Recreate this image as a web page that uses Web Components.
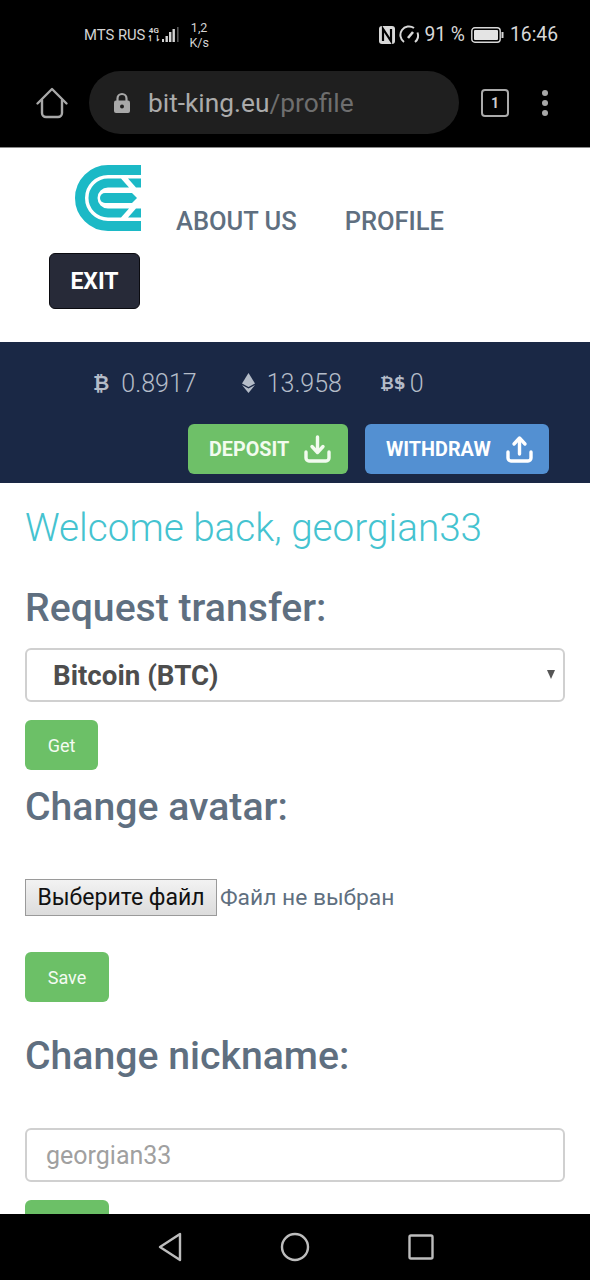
<!DOCTYPE html>
<html lang="en">
<head>
<meta charset="utf-8">
<title>bit-king.eu/profile</title>
<style>
	html,body{margin:0;height:100%;overflow:hidden;background:#fff;font-family:Roboto,"Liberation Sans",sans-serif}
	body{display:flex;flex-direction:column;height:1280px}
	profile-panel{flex:1;min-height:0}
</style>
</head>
<body>
<phone-top></phone-top>
<site-header></site-header>
<balance-bar></balance-bar>
<profile-panel>
	<section-title style="margin-top:35px">Request transfer:</section-title>
	<coin-select style="margin-top:20px"></coin-select>
	<app-button style="margin-top:18px;width:73px">Get</app-button>
	<section-title style="margin-top:17px">Change avatar:</section-title>
	<file-picker style="margin-top:52px"></file-picker>
	<app-button style="margin-top:36px;width:84px">Save</app-button>
	<section-title style="margin-top:34px">Change nickname:</section-title>
	<nick-input style="margin-top:52px"></nick-input>
	<!-- label of this one sits under the phone nav in the reference -->
	<app-button style="margin-top:18px;width:84px"></app-button>
</profile-panel>
<phone-nav></phone-nav>
<script>
function makeElement(name,html){
	const template=document.createElement('template');
	template.innerHTML=html;
	customElements.define(name,class extends HTMLElement{
		constructor(){
			super();
			this.attachShadow({mode:'open'});
			this.shadowRoot.appendChild(template.content.cloneNode(true));
		}
	});
}

makeElement('phone-top',`
<style>
	:host{display:block;height:148px;box-sizing:border-box;background:#000;border-bottom:1px solid #8a8a8a;color:#d4d4d4;font-family:Roboto,sans-serif}
	.status{display:flex;align-items:center;height:69px;padding:0 32px 0 84px;font-size:14.800px}
	.net{display:flex;align-items:center;gap:2px;margin-top:1px}
	.four{display:flex;flex-direction:column;font-size:8px;font-weight:700;line-height:8px;text-align:center;width:13px}
	.speed{font-size:12.500px;line-height:15px;text-align:center;margin-left:9px}
	.right{margin-left:auto;display:flex;align-items:center;font-size:19.300px;color:#d8d8d8}
	.pct{margin:0 6px 0 0}
	.clock{margin-left:6px}
	.bar{display:flex;align-items:center;height:63px;margin-top:2px}
	.home{margin-left:35px;width:34px;height:34px}
	.pill{display:flex;align-items:center;width:370px;height:63px;box-sizing:border-box;margin-left:20px;padding-left:24px;background:#1f1f1f;border-radius:32px;font-size:26.300px}
	.pill svg{margin-right:17px}
	.host{color:#ababab}.path{color:#6e6e6e}
	.tabs{margin-left:22px;width:28px;height:28px;box-sizing:border-box;border:2px solid #aaa;border-radius:4px;font-size:14px;font-weight:700;text-align:center;line-height:24px;color:#ccc}
	.dots{margin-left:32px}
</style>
<div class="status">
	<div class="net">
		<span>MTS RUS</span>
		<span class="four"><span>4G</span><span>↿⇂</span></span>
		<svg width="18" height="18" viewBox="0 0 18 18" fill="#d4d4d4"><rect x="0" y="13" width="2" height="3"/><rect x="3.500" y="10" width="2.400" height="6"/><rect x="7" y="6" width="2.400" height="10"/><rect x="10.500" y="3" width="2.400" height="13"/><rect x="15" y="1" width="1.600" height="15" fill="#555"/></svg>
	</div>
	<div class="speed">1,2<br>K/s</div>
	<div class="right">
		<svg width="18" height="20" viewBox="0 0 18 20" style="margin-right:2px"><rect x="1" y="1" width="16" height="18" rx="3" fill="#d8d8d8"/><path d="M5 16V4l8 12V4" fill="none" stroke="#000" stroke-width="2.200"/></svg>
		<svg width="23" height="20" viewBox="0 0 21 20" fill="none" stroke="#d8d8d8" stroke-width="2" style="margin-right:3px"><path d="M5 17A8.500 8.500 0 0 1 15 3"/><path d="M18.500 7.500A8.500 8.500 0 0 1 16 17"/><path d="M9 13l5-6" stroke-width="2.600"/></svg>
		<span class="pct">91 %</span>
		<svg width="33" height="16" viewBox="0 0 33 16"><rect x="0.800" y="0.800" width="28.400" height="14.400" rx="3" fill="none" stroke="#d8d8d8" stroke-width="1.400"/><rect x="3" y="3" width="24" height="10" rx="1" fill="#e4e4e4"/><rect x="30.500" y="5" width="2" height="6" fill="#d8d8d8"/></svg>
		<span class="clock">16:46</span>
	</div>
</div>
<div class="bar">
	<svg class="home" viewBox="0 0 34 34" fill="none" stroke="#a8a8a8" stroke-width="2.400" stroke-linejoin="round" stroke-linecap="round"><path d="M2.500 17.500L17 3l14.500 14.500"/><path d="M7 14v13a4 4 0 0 0 4 4h12a4 4 0 0 0 4-4V14"/></svg>
	<div class="pill">
		<svg width="18" height="22" viewBox="0 0 18 22"><path d="M4.500 9V6.500a4.500 4.500 0 0 1 9 0V9" fill="none" stroke="#a8a8a8" stroke-width="2.200"/><rect x="1" y="8.500" width="16" height="12.500" rx="2" fill="#a8a8a8"/><circle cx="9" cy="14.500" r="2" fill="#1f1f1f"/></svg>
		<span><span class="host">bit-king.eu</span><span class="path">/profile</span></span>
	</div>
	<div class="tabs">1</div>
	<svg class="dots" width="8" height="28" viewBox="0 0 8 28" fill="#a8a8a8"><circle cx="4" cy="4" r="3"/><circle cx="4" cy="14" r="3"/><circle cx="4" cy="24" r="3"/></svg>
</div>`);

makeElement('site-header',`
<style>
	:host{display:block;height:194px;box-sizing:border-box;padding:17px 0 0 49px;background:#fff;font-family:Roboto,sans-serif}
	.row{display:flex;align-items:flex-start;height:66px}
	.logo{margin-left:26px;width:66px;height:66px;display:block}
	a{font-size:25.500px;line-height:30px;font-weight:500;color:#5f6f80;text-decoration:none;margin-top:41px}
	.about{margin-left:35px}
	.prof{margin-left:48px}
	.exit{display:flex;align-items:center;justify-content:center;margin-top:22px;width:91px;height:56px;box-sizing:border-box;background:#272a38;border:1px solid #0b0b10;border-radius:6px;color:#fff;font-size:23px;font-weight:700}
</style>
<div class="row">
	<svg class="logo" viewBox="0 0 66 66" fill="#1cb9c6">
		<path d="M66 5H33a28 28 0 0 0 0 56H66" fill="none" stroke="#1cb9c6" stroke-width="10"/>
		<path d="M33 18a15 15 0 0 0 0 30" fill="none" stroke="#1cb9c6" stroke-width="9"/>
		<path d="M33 13.500H46L54 22.500H33z M33 52.500H46L54 43.500H33z"/>
		<path d="M53 13.500H66V22.500H61z M53 52.500H66V43.500H61z"/>
		<path d="M30 28H57L62 33L57 38H30a5 5 0 0 1 0-10z"/>
	</svg>
	<a class="about">ABOUT US</a>
	<a class="prof">PROFILE</a>
</div>
<div class="exit">EXIT</div>`);

makeElement('balance-bar',`
<style>
	:host{display:block;height:141px;box-sizing:border-box;padding-top:26px;background:#1a2845;color:#b4bcc8;font-family:Roboto,sans-serif}
	.bal{display:flex;align-items:center;height:30px;padding-left:93px;font-size:25px;font-weight:300}
	.sym{font-family:"DejaVu Sans",sans-serif;font-weight:700;font-size:20px;margin-right:12px}
	.eth{margin:0 12px 0 45px}
	.bs{margin:0 4px 0 38px;font-size:17px}
	.btns{display:flex;justify-content:flex-end;gap:17px;margin-top:26px;padding-right:41px}
	.btn{display:flex;align-items:center;box-sizing:border-box;height:50px;border-radius:6px;color:#fff;font-size:19.800px;font-weight:700}
	.dep{width:160px;padding-left:21px;background:#6ec068;color:#f2fbef}
	.wd{width:184px;padding-left:21px;background:#5390d2}
	.btn svg{margin-left:15px}
</style>
<div class="bal">
	<span class="sym">₿</span><span>0.8917</span>
	<svg class="eth" width="13" height="20" viewBox="0 0 13 20" fill="#b4bcc8"><path d="M6.500 0L13 10.500 6.500 14 0 10.500z"/><path d="M0 12l6.500 3.500L13 12l-6.500 8z"/></svg><span>13.958</span>
	<span class="sym bs">₿$</span><span>0</span>
</div>
<div class="btns">
	<div class="btn dep">DEPOSIT
		<svg width="27" height="28" viewBox="0 0 27 28" fill="none" stroke="#f2fbef" stroke-width="3.400" stroke-linecap="round" stroke-linejoin="round"><path d="M2 17v6a3 3 0 0 0 3 3h17a3 3 0 0 0 3-3v-6"/><path d="M13.500 2v14"/><path d="M8 11.500l5.500 6 5.500-6"/></svg>
	</div>
	<div class="btn wd">WITHDRAW
		<svg width="27" height="28" viewBox="0 0 27 28" fill="none" stroke="#fff" stroke-width="3.400" stroke-linecap="round" stroke-linejoin="round"><path d="M2 17v6a3 3 0 0 0 3 3h17a3 3 0 0 0 3-3v-6"/><path d="M13.500 19V4"/><path d="M8 9l5.500-6 5.500 6"/></svg>
	</div>
</div>`);

makeElement('profile-panel',`
<style>
	:host{display:block;overflow:hidden;box-sizing:border-box;padding:0 25px;background:#fff;font-family:Roboto,sans-serif}
	.welcome{margin-top:20px;font-size:38.700px;line-height:50px;font-weight:300;color:#45c3d0;white-space:nowrap}
</style>
<div class="welcome">Welcome back, georgian33</div>
<slot></slot>`);

makeElement('section-title',`
<style>
	:host{display:block;font-size:39.200px;line-height:40px;font-weight:500;color:#5f6f80;white-space:nowrap}
</style>
<slot></slot>`);

makeElement('coin-select',`
<style>
	:host{display:block;position:relative;height:54px}
	select{appearance:none;display:block;width:100%;height:100%;box-sizing:border-box;padding:0 0 0 26px;background:#fff;border:2px solid #d0d0d0;border-radius:6px;font:700 27.700px Roboto,sans-serif;color:#4d4d4d;outline:none}
	.arrow{position:absolute;right:10px;top:22px;width:0;height:0;border:4.500px solid transparent;border-top:9px solid #555;border-bottom:0}
</style>
<select><option>Bitcoin (BTC)</option></select>
<div class="arrow"></div>`);

makeElement('app-button',`
<style>
	:host{display:flex;align-items:center;justify-content:center;height:50px;background:#6cc067;border-radius:6px;color:#f4fbf2;font-family:Roboto,sans-serif;font-size:18px}
</style>
<slot></slot>`);

makeElement('file-picker',`
<style>
	:host{display:flex;align-items:center;height:37px;font-family:Roboto,sans-serif;font-size:22.800px;color:#5f6f80}
	button{box-sizing:border-box;width:192px;height:37px;padding:0;margin-right:3px;background:linear-gradient(#f2f2f2,#dcdcdc);border:1px solid #9a9a9a;font:23px Roboto,sans-serif;color:#111}
</style>
<button>Выберите файл</button><span>Файл не выбран</span>`);

makeElement('nick-input',`
<style>
	:host{display:block;height:54px}
	input{display:block;width:100%;height:100%;box-sizing:border-box;padding:0 0 0 19px;background:#fff;border:2px solid #d0d0d0;border-radius:6px;font:25px Roboto,sans-serif;color:#a0a0a0;outline:none}
</style>
<input value="georgian33">`);

makeElement('phone-nav',`
<style>
	:host{display:flex;align-items:center;justify-content:center;flex:none;height:66px;background:#000;gap:97.500px}
	svg{display:block}
</style>
<svg width="26" height="32" viewBox="0 0 26 32" fill="none" stroke="#bdbdbd" stroke-width="2.400" stroke-linejoin="round"><path d="M23 3v26L3 16z"/></svg>
<svg width="30" height="30" viewBox="0 0 30 30" fill="none" stroke="#bdbdbd" stroke-width="2.400"><circle cx="15" cy="15" r="13"/></svg>
<svg width="26" height="26" viewBox="0 0 26 26" fill="none" stroke="#bdbdbd" stroke-width="2.400" stroke-linejoin="round"><rect x="1.500" y="1.500" width="23" height="23" rx="1.500"/></svg>`);
</script>
</body>
</html>
